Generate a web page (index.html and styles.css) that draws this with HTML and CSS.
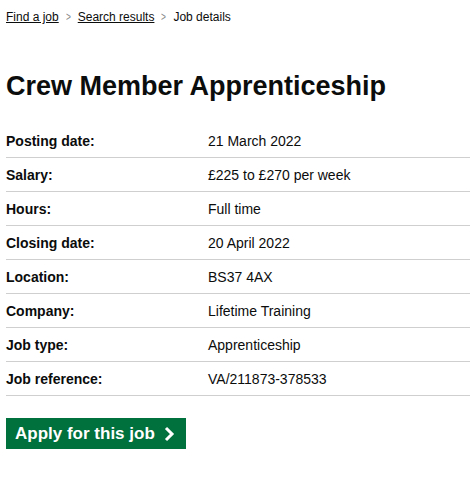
FILE: index.html
```html
<!DOCTYPE html>
<html lang="en">
<head>
  <meta charset="UTF-8">
  <meta name="viewport" content="width=device-width, initial-scale=1.0">
  <title>Crew Member Apprenticeship</title>
  <link rel="stylesheet" href="styles.css">
</head>
<body>
<div class="page">
  <nav class="breadcrumbs">
    <a href="#">Find a job</a>
    <span class="sep">&gt;</span>
    <a href="#">Search results</a>
    <span class="sep">&gt;</span>
    <span>Job details</span>
  </nav>

  <h1 class="title">Crew Member Apprenticeship</h1>

  <dl class="details">
    <div class="row"><dt>Posting date:</dt><dd>21 March 2022</dd></div>
    <div class="row"><dt>Salary:</dt><dd>£225 to £270 per week</dd></div>
    <div class="row"><dt>Hours:</dt><dd>Full time</dd></div>
    <div class="row"><dt>Closing date:</dt><dd>20 April 2022</dd></div>
    <div class="row"><dt>Location:</dt><dd>BS37 4AX</dd></div>
    <div class="row"><dt>Company:</dt><dd>Lifetime Training</dd></div>
    <div class="row"><dt>Job type:</dt><dd>Apprenticeship</dd></div>
    <div class="row"><dt>Job reference:</dt><dd>VA/211873-378533</dd></div>
  </dl>

  <a href="#" class="apply-button">Apply for this job
    <svg width="12" height="16" viewBox="0 0 12 16"><path d="M2 2 L8 8 L2 14" fill="none" stroke="#fff" stroke-width="3"/></svg>
  </a>
</div>
</body>
</html>
```

FILE: styles.css
```css
* { box-sizing: border-box; }
body {
  margin: 0;
  background-color: #ffffff;
  color: #0b0c0c;
  font-family: "Liberation Sans", Arial, sans-serif;
}
.page {
  padding: 8px 4px 0 6px;
}
.breadcrumbs {
  font-size: 12px;
  display: flex;
  align-items: center;
  gap: 6px;
  height: 18px;
}
.breadcrumbs a {
  color: #0b0c0c;
  text-decoration: underline;
}
.breadcrumbs .sep {
  color: #8a8a8a;
  font-size: 12px;
  transform: scaleX(0.7);
}
.title {
  font-size: 27px;
  font-weight: bold;
  margin: 44px 0 22px;
  line-height: 32px;
}
.details {
  margin: 0;
}
.row {
  display: flex;
  height: 34px;
  align-items: center;
  border-bottom: 1px solid #cfcfcf;
  font-size: 14px;
  padding-top: 1px;
}
.row dt {
  width: 202px;
  font-weight: bold;
}
.row dd {
  margin: 0;
}
.apply-button {
  display: inline-flex;
  align-items: center;
  gap: 9px;
  margin-top: 22px;
  height: 31px;
  padding: 0 10px 0 9px;
  background-color: #00703c;
  color: #ffffff;
  font-size: 17px;
  font-weight: bold;
  text-decoration: none;
  box-shadow: 0 2px 0 #002d18;
}
```
